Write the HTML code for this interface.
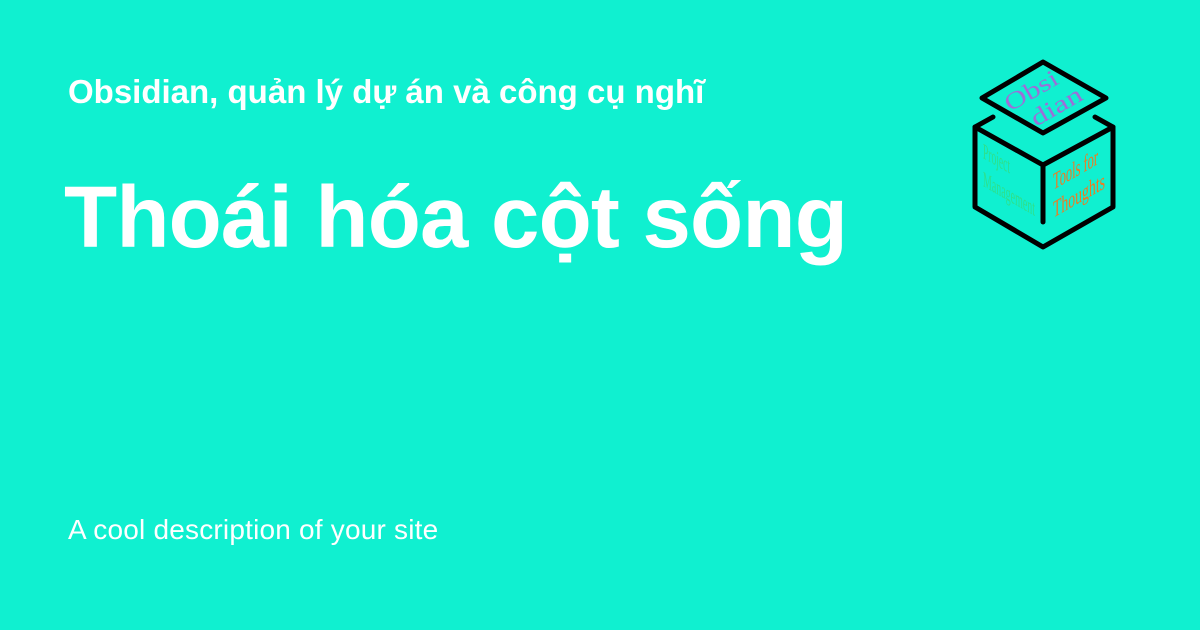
<!DOCTYPE html>
<html><head><meta charset="utf-8"><style>
html,body{margin:0;padding:0}
body{width:1200px;height:630px;background:#10F0D0;position:relative;overflow:hidden;font-family:"Liberation Sans",sans-serif;color:#fff}
.a{position:absolute;left:68px;top:73px;font-size:33px;font-weight:bold;white-space:nowrap}
.t{position:absolute;left:64px;top:168px;font-size:87px;font-weight:bold;white-space:nowrap;letter-spacing:-0.8px}
.d{position:absolute;left:68px;top:514px;font-size:28px;white-space:nowrap;letter-spacing:0.2px}
svg{position:absolute;left:0;top:0}
</style></head><body>
<div class="a">Obsidian, quản lý dự án và công cụ nghĩ</div>
<div class="t">Thoái hóa cột sống</div>
<div class="d">A cool description of your site</div>
<svg width="1200" height="630">
<g fill="none" stroke="#000" stroke-width="5" stroke-linejoin="round" stroke-linecap="round">
<path d="M1043 62 L1106 98 L1043 133 L982 98 Z"/>
<path d="M993 117 L975 127 L975 207 L1043 247 L1113 207 L1113 127 L1095 117"/>
<path d="M975 127 L1043 165 L1113 127"/>
<path d="M1043 165 L1043 222"/>
</g>
<text font-family="Liberation Serif" font-size="24" fill="#9b6fd8" textLength="58" lengthAdjust="spacingAndGlyphs" transform="translate(1010 112) rotate(-30)">Obsi</text>
<text font-family="Liberation Serif" font-size="24" fill="#9b6fd8" textLength="56" lengthAdjust="spacingAndGlyphs" transform="translate(1036 127) rotate(-30)">dian</text>
<text font-family="Liberation Serif" font-size="22" fill="#2ee08a" textLength="27" lengthAdjust="spacingAndGlyphs" transform="translate(983 158) skewY(30)">Project</text>
<text font-family="Liberation Serif" font-size="22" fill="#2ee08a" textLength="52" lengthAdjust="spacingAndGlyphs" transform="translate(983 186) skewY(30)">Management</text>
<text font-family="Liberation Serif" font-size="24" fill="#f07a20" textLength="45" lengthAdjust="spacingAndGlyphs" transform="translate(1053 190) skewY(-30)">Tools for</text>
<text font-family="Liberation Serif" font-size="24" fill="#f07a20" textLength="52" lengthAdjust="spacingAndGlyphs" transform="translate(1053 218) skewY(-30)">Thoughts</text>
</svg>
</body></html>
